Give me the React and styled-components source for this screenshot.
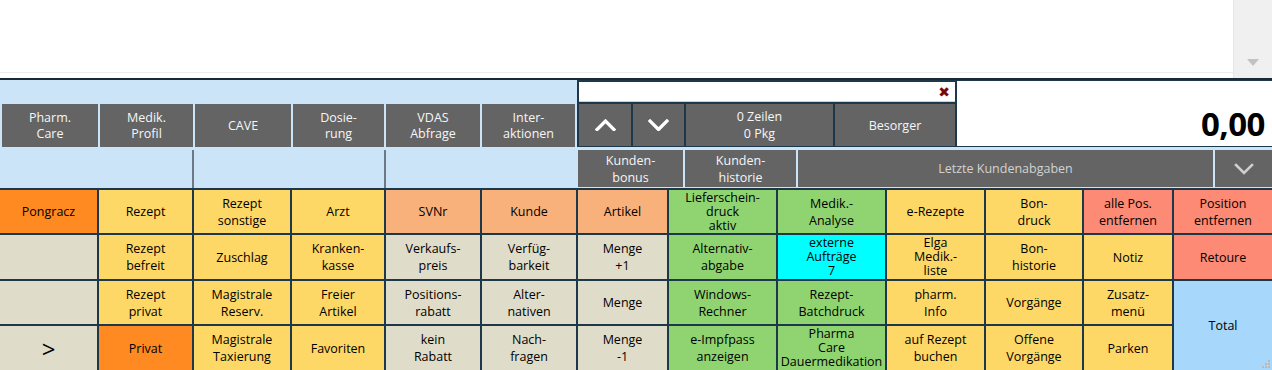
import React from "react";
import styled, { createGlobalStyle } from "styled-components";

const GlobalStyle = createGlobalStyle`
  html, body { margin: 0; padding: 0; background: #ffffff; overflow: hidden; }
  body { font-family: "Open Sans", "Noto Sans", "Liberation Sans", sans-serif; }
  * { box-sizing: border-box; }
`;

const NAVY = "#1d374b";
const PANEL = "#cce4f7";
const BTN = "#646464";

const Page = styled.div`
  width: 1272px;
  height: 370px;
  display: flex;
  flex-direction: column;
  overflow: hidden;
`;

const TopArea = styled.div`
  height: 78px;
  display: flex;
`;

const ListArea = styled.div`
  flex: 1;
  border-bottom: 1px solid #ececec;
  margin-bottom: 5px;
`;

const ScrollBar = styled.div`
  width: 39px;
  background: #f0f0f0;
  border-left: 1px solid #e6e6e6;
  display: flex;
  flex-direction: column;
  justify-content: flex-end;
  align-items: center;
  padding-bottom: 12px;
`;

const Divider = styled.div`
  height: 2px;
  background: #1c2a36;
`;

const Middle = styled.div`
  height: 108px;
  background: ${PANEL};
  display: grid;
  grid-template-columns: 577px 1fr;
`;

const LeftPanel = styled.div`
  display: flex;
  flex-direction: column;
  padding-top: 24px;
`;

const ButtonRow = styled.div`
  display: flex;
  gap: 2px;
  padding-left: 2px;
  height: 43px;
`;

const DarkButton = styled.div`
  width: ${(p) => p.$w}px;
  height: 100%;
  background: ${BTN};
  color: ${(p) => (p.$dim ? "#d2d2d2" : "#f6f6f6")};
  font-size: 12.5px;
  line-height: 16px;
  display: flex;
  align-items: center;
  justify-content: center;
  text-align: center;
  white-space: pre-line;
`;

const SubPanels = styled.div`
  margin-top: 3px;
  flex: 1;
  display: flex;
`;

const SubPanel = styled.div`
  width: ${(p) => p.$w}px;
  border-right: ${(p) => (p.$line ? "2px solid #6d7a85" : "none")};
`;

const RightPanel = styled.div`
  display: flex;
  flex-direction: column;
`;

const TopBlock = styled.div`
  height: 67px;
  background: ${NAVY};
  display: grid;
  grid-template-columns: 376px 1fr;
  column-gap: 2px;
  padding: 2px 0 1px 2px;
`;

const Controls = styled.div`
  display: grid;
  grid-template-rows: 20px 1fr;
  row-gap: 2px;
`;

const SearchBox = styled.div`
  background: #ffffff;
  display: flex;
  justify-content: flex-end;
  align-items: center;
  padding-right: 5px;
  border-bottom: 1px solid #b9d3e6;
`;

const ClearX = styled.span`
  color: #7a0a0a;
  font-family: "DejaVu Sans", sans-serif;
  font-weight: bold;
  font-size: 14px;
  line-height: 1;
`;

const NavRow = styled.div`
  display: grid;
  grid-template-columns: 52px 51px 147px 120px;
  gap: 2px;
`;

const NavButton = styled.div`
  background: ${BTN};
  color: #f6f6f6;
  font-size: 12.5px;
  line-height: 17px;
  display: flex;
  align-items: center;
  justify-content: center;
  text-align: center;
  white-space: pre-line;
`;

const TotalBox = styled.div`
  background: #ffffff;
  margin-top: -1px;
  display: flex;
  align-items: flex-end;
  justify-content: flex-end;
  padding: 0 7px 2px 0;
  font-size: 33px;
  font-weight: 700;
  color: #000;
  line-height: 1.2;
  letter-spacing: -0.5px;
`;

const CustomerRow = styled.div`
  margin-top: 3px;
  height: 37px;
  display: grid;
  grid-template-columns: 105px 111px 1fr 57px;
  gap: 2px;
  padding-left: 1px;
`;

const Grid = styled.div`
  height: 182px;
  background: ${NAVY};
  padding-top: 2px;
  display: grid;
  grid-template-columns: 97px 93px 96px 92px 94px 94px 89px 107px 107px 97px 96px 88px 98px;
  grid-template-rows: 43px 44px 43px 44px;
  gap: 2px;
`;

const COLORS = {
  orange: "#fe8a21",
  yellow: "#fed866",
  beige: "#e0dcca",
  salmon: "#f9b17b",
  green: "#8fd470",
  cyan: "#00ffff",
  coral: "#fc8a74",
  blue: "#a7d8fc",
};

const Cell = styled.div`
  position: relative;
  background: ${(p) => COLORS[p.$c]};
  color: #000;
  font-size: ${(p) => (p.$big ? "24px" : "12.5px")};
  line-height: ${(p) => (p.$tight ? "14px" : "17px")};
  display: flex;
  align-items: center;
  justify-content: center;
  text-align: center;
  white-space: pre-line;
  grid-row: ${(p) => (p.$span ? "span 2" : "auto")};
`;

const Grip = styled.svg`
  position: absolute;
  right: 2px;
  bottom: 2px;
`;

const Chevron = ({ dir = "down", color = "#fff", w = 20, sw = 3.2 }) => (
  <svg width={w} height={w * 0.6} viewBox="0 0 20 12">
    <polyline
      points={dir === "up" ? "2,10 10,2 18,10" : "2,2 10,10 18,2"}
      fill="none"
      stroke={color}
      strokeWidth={sw}
      strokeLinecap="square"
    />
  </svg>
);

const cells = [
  ["Pongracz", "orange"], ["Rezept", "yellow"], ["Rezept\nsonstige", "yellow"], ["Arzt", "yellow"],
  ["SVNr", "salmon"], ["Kunde", "salmon"], ["Artikel", "salmon"], ["Lieferschein-\ndruck\naktiv", "green", true],
  ["Medik.-\nAnalyse", "green"], ["e-Rezepte", "yellow"], ["Bon-\ndruck", "yellow"], ["alle Pos.\nentfernen", "coral"],
  ["Position\nentfernen", "coral"],

  ["", "beige"], ["Rezept\nbefreit", "yellow"], ["Zuschlag", "yellow"], ["Kranken-\nkasse", "yellow"],
  ["Verkaufs-\npreis", "beige"], ["Verfüg-\nbarkeit", "beige"], ["Menge\n+1", "beige"], ["Alternativ-\nabgabe", "green"],
  ["externe\nAufträge\n7", "cyan", true], ["Elga\nMedik.-\nliste", "yellow", true], ["Bon-\nhistorie", "yellow"], ["Notiz", "yellow"],
  ["Retoure", "coral"],

  ["", "beige"], ["Rezept\nprivat", "yellow"], ["Magistrale\nReserv.", "yellow"], ["Freier\nArtikel", "yellow"],
  ["Positions-\nrabatt", "beige"], ["Alter-\nnativen", "beige"], ["Menge", "beige"], ["Windows-\nRechner", "green"],
  ["Rezept-\nBatchdruck", "green"], ["pharm.\nInfo", "yellow"], ["Vorgänge", "yellow"], ["Zusatz-\nmenü", "yellow"],
  ["Total", "blue", false, true],

  [">", "beige", false, false, true], ["Privat", "orange"], ["Magistrale\nTaxierung", "yellow"], ["Favoriten", "yellow"],
  ["kein\nRabatt", "beige"], ["Nach-\nfragen", "beige"], ["Menge\n-1", "beige"], ["e-Impfpass\nanzeigen", "green"],
  ["Pharma\nCare\nDauermedikation", "green", true], ["auf Rezept\nbuchen", "yellow"], ["Offene\nVorgänge", "yellow"], ["Parken", "yellow"],
];

const leftButtons = [
  ["Pharm.\nCare", 96], ["Medik.\nProfil", 93], ["CAVE", 96], ["Dosie-\nrung", 91], ["VDAS\nAbfrage", 94], ["Inter-\naktionen", 93],
];

export default function App() {
  return (
    <Page>
      <GlobalStyle />
      <TopArea>
        <ListArea />
        <ScrollBar>
          <svg width="12" height="7" viewBox="0 0 12 7">
            <polygon points="0,0 12,0 6,7" fill="#c2c2c2" />
          </svg>
        </ScrollBar>
      </TopArea>
      <Divider />
      <Middle>
        <LeftPanel>
          <ButtonRow>
            {leftButtons.map(([t, w]) => (
              <DarkButton key={t} $w={w}>{t}</DarkButton>
            ))}
          </ButtonRow>
          <SubPanels>
            <SubPanel $w={194} $line />
            <SubPanel $w={192} $line />
            <SubPanel $w={191} />
          </SubPanels>
        </LeftPanel>
        <RightPanel>
          <TopBlock>
            <Controls>
              <SearchBox><ClearX>✖</ClearX></SearchBox>
              <NavRow>
                <NavButton><Chevron dir="up" w={21} /></NavButton>
                <NavButton><Chevron dir="down" w={21} /></NavButton>
                <NavButton>{"0 Zeilen\n0 Pkg"}</NavButton>
                <NavButton>Besorger</NavButton>
              </NavRow>
            </Controls>
            <TotalBox>0,00</TotalBox>
          </TopBlock>
          <CustomerRow>
            <NavButton>{"Kunden-\nbonus"}</NavButton>
            <NavButton>{"Kunden-\nhistorie"}</NavButton>
            <DarkButton $dim>Letzte Kundenabgaben</DarkButton>
            <NavButton><Chevron dir="down" color="#cfcfcf" w={20} sw={2.6} /></NavButton>
          </CustomerRow>
        </RightPanel>
      </Middle>
      <Grid>
        {cells.map(([t, c, tight, span, big], i) => (
          <Cell key={i} $c={c} $tight={tight} $span={span} $big={big}>
            {t}
            {span && (
              <Grip width="10" height="10" viewBox="0 0 10 10">
                {[[8, 0], [8, 3], [5, 3], [8, 6], [5, 6], [2, 6]].map(([x, y]) => (
                  <rect key={`${x}-${y}`} x={x} y={y + 2} width="2" height="2" fill="#b8b8b8" />
                ))}
              </Grip>
            )}
          </Cell>
        ))}
      </Grid>
    </Page>
  );
}
